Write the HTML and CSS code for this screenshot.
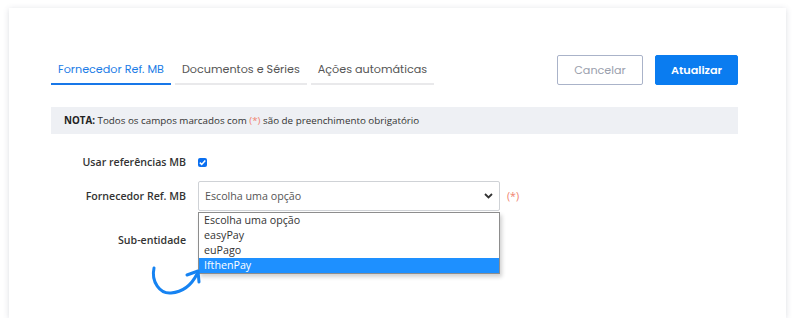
FILE: index.html
```html
<!DOCTYPE html>
<html lang="pt">
<head>
  <meta charset="UTF-8">
  <title>Fornecedor Ref. MB</title>
  <link rel="stylesheet" href="styles.css">
</head>
<body>
  <div class="card">
    <div class="topbar">
      <nav class="tabs">
        <a class="tab active">Fornecedor Ref. MB</a>
        <a class="tab">Documentos e Séries</a>
        <a class="tab">Ações automáticas</a>
      </nav>
      <div class="actions">
        <button class="btn btn-outline">Cancelar</button>
        <button class="btn btn-primary">Atualizar</button>
      </div>
    </div>

    <div class="note"><b>NOTA:</b> Todos os campos marcados com <span class="req">(*)</span> são de preenchimento obrigatório</div>

    <div class="form">
      <div class="row row-check">
        <label>Usar referências MB</label>
        <span class="checkbox">
          <svg width="9" height="9" viewBox="0 0 9 9"><path d="M1.8 4.6 L3.7 6.4 L7.3 2.4" fill="none" stroke="#fff" stroke-width="1.5"/></svg>
        </span>
      </div>
      <div class="row row-select">
        <label>Fornecedor Ref. MB</label>
        <div class="select-wrap">
          <div class="select">
            <span>Escolha uma opção</span>
            <svg width="9" height="6" viewBox="0 0 9 6"><path d="M1 1 L4.5 4.5 L8 1" fill="none" stroke="#333" stroke-width="1.8"/></svg>
          </div>
          <ul class="dropdown">
            <li>Escolha uma opção</li>
            <li>easyPay</li>
            <li>euPago</li>
            <li class="selected">IfthenPay</li>
          </ul>
        </div>
        <span class="req">(*)</span>
      </div>
      <div class="row row-sub">
        <label>Sub-entidade</label>
      </div>
    </div>

    <svg class="arrow" width="60" height="44" viewBox="0 0 60 44">
      <path d="M4 10 C1 24 10 36 21 35 C33 34 42 26 47 16" fill="none" stroke="#1683f2" stroke-width="3" stroke-linecap="round"/>
      <path d="M37 17 L48 13 L49 24" fill="none" stroke="#1683f2" stroke-width="3" stroke-linecap="round" stroke-linejoin="round"/>
    </svg>
  </div>
</body>
</html>
```
FILE: styles.css
```css
/* base */
body { margin: 0; background: #fff; font-family: 'Open Sans', sans-serif; color: #333; }
.card { position: relative; margin: 8px 14px 0 9px; height: 310px; background: #fff; box-sizing: border-box; padding: 47px 48px 0 42px; box-shadow: 0 1px 6px rgba(60, 70, 100, 0.18); }

/* tabs + buttons */
.topbar { display: flex; justify-content: space-between; align-items: center; }
.tabs { display: flex; gap: 4px; align-self: flex-end; }
.tab { font-family: 'Poppins', 'Lato', sans-serif; font-size: 11.2px; color: #555; padding: 0 7px 5px 7px; border-bottom: 2px solid #e9e9eb; }
.tab.active { color: #1b7ce6; border-bottom-color: #1877e8; }
.actions { display: flex; gap: 12px; }
.btn { height: 30px; font-family: 'Poppins', 'Lato', sans-serif; font-size: 11.2px; border-radius: 2px; padding: 0; cursor: pointer; }
.btn-outline { width: 86px; background: #fff; color: #9aa0ad; border: 1px solid #aab3c9; }
.btn-primary { width: 83px; background: #0a7cf0; color: #fff; border: 1px solid #0a7cf0; font-weight: 600; }

/* note */
.note { margin-top: 22px; height: 27px; line-height: 27px; background: #eef0f4; padding-left: 13px; font-size: 9.8px; color: #333; }
.note b { font-weight: 700; color: #222; }
.req { color: #f0816e; }

/* form */
.form { display: flex; flex-direction: column; }
.row { display: grid; grid-template-columns: 135px auto auto; column-gap: 12px; align-items: center; justify-content: start; }
.row label { text-align: right; font-weight: 600; font-size: 10.6px; color: #333; }
.row-check { margin-top: 18px; height: 20px; }
.row-select { margin-top: 9px; height: 30px; }
.row-select .req { font-size: 10.6px; margin-left: -5px; }
.row-sub { margin-top: 14px; height: 30px; }
.checkbox { width: 9px; height: 9px; background: #0a6ff0; border-radius: 2px; display: flex; align-items: center; justify-content: center; }

/* select */
.select-wrap { position: relative; width: 302px; }
.select { height: 30px; box-sizing: border-box; border: 1px solid #cfd2d6; border-radius: 2px; display: flex; align-items: center; justify-content: space-between; padding: 0 6px; font-size: 10.7px; color: #555; background: #fff; }
.dropdown { position: absolute; left: 0; top: 31px; width: 302px; box-sizing: border-box; margin: 0; padding: 0; list-style: none; background: #fff; border: 1px solid #8d8d8d; box-shadow: 2px 3px 4px rgba(0, 0, 0, 0.18); z-index: 2; }
.dropdown li { height: 15px; line-height: 15px; padding-left: 5px; font-size: 10.7px; color: #333; }
.dropdown li.selected { background: #1e90ff; color: #fff; }

/* arrow overlay */
.arrow { position: absolute; left: 141px; top: 250px; z-index: 3; }
```
